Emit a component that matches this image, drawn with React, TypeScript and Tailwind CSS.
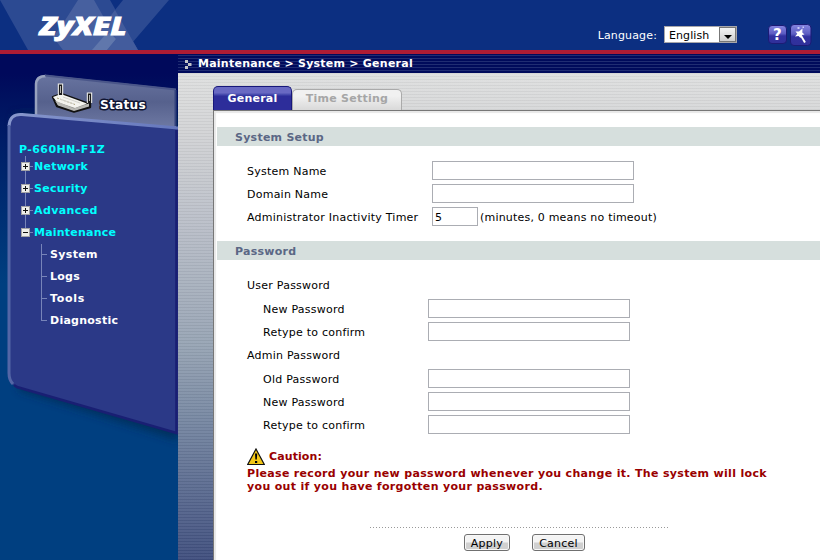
import React from "react";

const stripes =
  "bg-[repeating-linear-gradient(to_bottom,rgba(0,0,0,0.04)_0px,rgba(0,0,0,0.04)_1px,rgba(255,255,255,0.05)_1px,rgba(255,255,255,0.05)_3px)]";

function Logo() {
  return (
    <svg width="180" height="50" viewBox="0 0 180 50" className="block">
      <path d="M0 0H110L138 50H28Z" fill="#2c4a92" />
      <path d="M123 0H169L126 50H107L121 31L115 10Z" fill="#2c4a92" />
      <path d="M78 0H94L116 39L107 50H63L53 37L64 22Z" fill="#47609f" />
      <path d="M115 10L138 50H107L116 39L106 22Z" fill="#435c9d" />
      <path d="M105 35L110 33L116 39L107 50H92Z" fill="#6077ac" />
      <text x="39.8" y="35.1" textLength="87" lengthAdjust="spacingAndGlyphs" fill="#fff" stroke="#fff" strokeWidth="1.1" fontFamily="Noto Sans, Open Sans, sans-serif" fontWeight="800" fontStyle="italic" fontSize="24.5">ZyXEL</text>
    </svg>
  );
}

function HeaderIcons() {
  return (
    <svg width="44" height="24" viewBox="0 0 44 24" className="block">
      <defs>
        <linearGradient id="btn" x1="0" y1="0" x2="0" y2="1">
          <stop offset="0" stopColor="#8585e0" />
          <stop offset="0.45" stopColor="#5c5cc2" />
          <stop offset="0.58" stopColor="#3131a0" />
          <stop offset="1" stopColor="#30309a" />
        </linearGradient>
      </defs>
      <rect x="0.5" y="2.5" width="18" height="18" rx="3.5" fill="url(#btn)" stroke="#1b1b75" />
      <text x="9.5" y="17" textAnchor="middle" fill="#fff" fontFamily="DejaVu Sans, sans-serif" fontWeight="700" fontSize="15">?</text>
      <rect x="22.5" y="1.5" width="20.5" height="21" rx="3.5" fill="url(#btn)" stroke="#1b1b75" />
      <path d="M27.5 8.5L31 8.5L34.5 5.5L34.3 9.5L36.5 11.5L33.8 12L32.5 15L30.5 13L27 13.5L29.3 10.8Z" fill="#fff" />
      <path d="M32 11L37 19.5" stroke="#fff" strokeWidth="1.9" />
      <path d="M29.5 4h2v2h-2zM34.5 3.5h1.5v1.5h-1.5z" fill="#c9c9f5" />
    </svg>
  );
}

function SidebarArt() {
  return (
    <svg width="178" height="506" viewBox="0 0 178 506" className="block">
      <defs>
        <linearGradient id="tab" x1="0" y1="0" x2="0" y2="1">
          <stop offset="0" stopColor="#6874a0" />
          <stop offset="0.5" stopColor="#56618d" />
          <stop offset="1" stopColor="#6f7aa4" />
        </linearGradient>
        <linearGradient id="rim" x1="0" y1="0" x2="1" y2="0">
          <stop offset="0" stopColor="#8797cc" />
          <stop offset="1" stopColor="#6577bd" />
        </linearGradient>
        <filter id="soft" x="-10%" y="-10%" width="120%" height="120%">
          <feGaussianBlur stdDeviation="4" />
        </filter>
      </defs>
      <path d="M14 60H178V386L19 336Z" fill="#002b50" opacity="0.75" filter="url(#soft)" />
      <path d="M35 70V31Q35 20 46 21L176 35V75Z" fill="url(#tab)" />
      <path d="M36 66V31Q36 22 46 22" fill="none" stroke="#98a2be" strokeWidth="2.5" />
      <path d="M45 21.5L176 35.5" fill="none" stroke="#4a5689" strokeWidth="2" />
      <path d="M175.5 36V72" stroke="#33427c" strokeWidth="2" />
      <path d="M8 321V69Q9 59 20 60L178 74V380L18 333Q8 330 8 321Z" fill="#2b3987" />
      <path d="M176.5 76V379L17 333L14 331" fill="none" stroke="#191f73" strokeWidth="2.6" />
      <path d="M9 72Q10 59.5 22 60.5L178 74" fill="none" stroke="url(#rim)" strokeWidth="3" />
      <path d="M9 71V319Q9 326 13 330" fill="none" stroke="#5466a6" strokeWidth="3" />
      <g strokeLinejoin="round">
        <path d="M53 43L61 40L86 49L90 48V53L74 57.5L57 52Z" fill="#8f8f8b" stroke="#111" strokeWidth="2.4" />
        <path d="M53 43L61 40L87 49.5L75 54L57 48Z" fill="#f4f4ee" />
        <path d="M55 46.5L74 54.5L89 49.5V52.5L74 57L58 51.5Z" fill="#b9b9b4" />
        <path d="M57 44L75 50.5" stroke="#aaa37c" strokeDasharray="2 1.5" />
        <path d="M63 43L80 49M60 45L74 50" stroke="#d4d4ce" />
        <path d="M60.5 41V29.5M89.5 49V38.5" stroke="#eeeeea" strokeWidth="5.4" />
        <path d="M60.5 41V30.5M89.5 49V39.5" stroke="#1a1a1a" strokeWidth="3.2" />
        <path d="M60.5 39V32M89.5 47V41" stroke="#b5b5b2" strokeWidth="1" />
      </g>
      <text x="100" y="54.5" textLength="46" lengthAdjust="spacingAndGlyphs" fill="#fff" stroke="#101532" strokeWidth="3" paintOrder="stroke" strokeLinejoin="round" fontFamily="DejaVu Sans, sans-serif" fontWeight="700" fontSize="12">Status</text>
    </svg>
  );
}

function TreeBox({ open }: { open?: boolean }) {
  return (
    <svg width="13" height="9" viewBox="0 0 13 9" className="block shrink-0">
      <rect x="0.5" y="0.5" width="8" height="8" fill="#eeeeea" stroke="#a3a3a6" />
      <path d={open ? "M2 4.5H7" : "M2 4.5H7M4.5 2V7"} stroke="#111" />
      <path d="M9 4.5H12" stroke="#7784b9" />
    </svg>
  );
}

function Tree() {
  const groups = [
    { name: "Network", ls: "tracking-[0.25px]" },
    { name: "Security", ls: "tracking-[0.3px]" },
    { name: "Advanced", ls: "tracking-[0.4px]" },
    { name: "Maintenance", ls: "tracking-[0.22px]" },
  ];
  const pages = [
    { name: "System", ls: "tracking-[0.35px]" },
    { name: "Logs", ls: "tracking-[0.25px]" },
    { name: "Tools", ls: "tracking-[0.7px]" },
    { name: "Diagnostic", ls: "tracking-[0.25px]" },
  ];
  return (
    <div className="flex flex-col text-[11px] font-bold text-[#00ffff]">
      <div className="mb-[-1px] h-[15px] pl-[19px] leading-[15px] tracking-[0.42px]">P-660HN-F1Z</div>
      <div className="relative">
        <div className="absolute top-0 left-[25px] h-[76px] w-px bg-[#7784b9]" />
        {groups.map((g, i) => (
          <div key={g.name} className="relative flex h-[22px] items-start pl-[21px]">
            <div className="pt-[6px]"><TreeBox open={i === 3} /></div>
            <span className={`leading-[22px] ${g.ls}`}>{g.name}</span>
          </div>
        ))}
      </div>
      <div className="relative text-white">
        <div className="absolute top-0 left-[41px] h-[77px] w-px bg-[#7784b9]" />
        {pages.map((p) => (
          <div key={p.name} className="flex h-[22px] items-start pl-[41px]">
            <div className="mt-[10px] h-px w-[6px] bg-[#7784b9]" />
            <span className={`pl-[3px] leading-[22px] ${p.ls}`}>{p.name}</span>
          </div>
        ))}
      </div>
    </div>
  );
}

function SectionBar({ title }: { title: string }) {
  return (
    <div className="h-[19px] bg-[#d6dfdd] pl-[18px] text-[11px] leading-[21px] font-bold tracking-[0.25px] text-[#5b6785]">{title}</div>
  );
}

function Field({ label, indent, value, after }: { label: string; indent?: boolean; value?: string; after?: string }) {
  return (
    <div className="flex h-[23px] items-start">
      <label className={`shrink-0 leading-[21px] whitespace-nowrap ${indent ? "w-[211px] pl-[46px]" : "w-[215px] pl-[30px]"}`}>{label}</label>
      <input
        readOnly
        value={value ?? ""}
        className={`h-[19px] shrink-0 rounded-none border border-[#abadb3] bg-white px-[2px] pt-[2px] text-[11px] outline-none ${value ? "w-[46px]" : "w-[202px]"}`}
      />
      {after && <span className="pl-[2px] leading-[21px] tracking-[0.2px] whitespace-nowrap">{after}</span>}
    </div>
  );
}

function Button({ children, className }: { children: React.ReactNode; className: string }) {
  return (
    <button className={`h-[17px] rounded-[3px] border border-[#707070] bg-linear-to-b from-[#f4f4f4] from-45% to-[#d0d0d0] to-55% text-[11px] leading-[17px] shadow-[inset_0_0_0_1px_#f8f8f8] ${className}`}>
      {children}
    </button>
  );
}

export default function App() {
  return (
    <div className="flex h-[560px] w-[820px] flex-col overflow-hidden bg-white font-['DejaVu_Sans',Verdana,sans-serif] text-[11px] tracking-[0.24px] text-black">
      <header className="flex h-[54px] shrink-0 justify-between border-b-4 border-[#ad1c34] bg-[#0c2f81]">
        <Logo />
        <div className="flex pr-[8px]">
          <span className="pt-[27px] leading-[17px] tracking-[0.15px] text-white">Language:</span>
          <div className="mt-[26px] ml-[7px] flex h-[17px] w-[73px] border border-[#a7a6aa] bg-white">
            <span className="flex-1 pl-[4px] leading-[17px] tracking-[0.1px]">English</span>
            <div className="flex h-[15px] w-[17px] items-center justify-center border border-[#777] bg-linear-to-b from-[#f4f4f4] to-[#cfcfcf] pt-[4px]">
              <svg width="8" height="4" viewBox="0 0 8 4"><path d="M0 0H8L4 4Z" fill="#000" /></svg>
            </div>
          </div>
          <div className="mt-[23px] ml-[31px]"><HeaderIcons /></div>
        </div>
      </header>

      <div className="flex min-h-0 flex-1">
        <aside className="relative w-[178px] shrink-0 bg-linear-to-b from-[#00095b] from-[20px] to-[#003f80] to-[230px]">
          <div className="absolute inset-0"><SidebarArt /></div>
          <nav className="relative pt-[88px]"><Tree /></nav>
        </aside>

        <main className="flex min-w-0 flex-1 flex-col">
          <div className="flex h-[19px] shrink-0 items-start bg-[repeating-linear-gradient(to_bottom,#000a5b_0px,#000a5b_1px,#202c72_1px,#202c72_2px,#000a5b_2px,#000a5b_3px)]">
            <svg width="20" height="19" viewBox="0 0 20 19" className="block"><path d="M7 6h3v3H7zM10 9h3.5v3H10zM7 12h3v3H7z" fill="#c3c3c8" /></svg>
            <h1 className="leading-[19px] font-bold whitespace-nowrap text-white">Maintenance &gt; System &gt; General</h1>
          </div>

          <div className="flex min-h-0 flex-1 flex-col bg-[linear-gradient(to_bottom,#dedfdf_0px,#d2d3d5_60px,#b8bdc7_155px,#96a3b3_272px,#7485a0_350px,#3e4d7d_487px)]">
            <div className={`flex min-h-0 flex-1 flex-col ${stripes}`}>
              <div className="flex h-[37px] shrink-0 items-end pl-[35px]">
                <div className="h-[24px] w-[79px] rounded-t-[5px] border border-b-0 border-[#17177a] bg-linear-to-b from-[#6969c3] from-25% to-[#2d2d9a] to-40% text-center leading-[23px] font-bold text-white">General</div>
                <div className="h-[21px] w-[110px] rounded-t-[5px] border border-b-0 border-[#aaa] bg-linear-to-b from-[#f1f1f1] from-30% to-[#d9d9d9] text-center leading-[18px] font-bold text-[#a6a6a6]">Time Setting</div>
              </div>
              <div className="ml-[35px] flex min-h-0 flex-1 flex-col border-t border-l border-[#777] bg-white pt-[16px] pl-[3px] shadow-[inset_2px_2px_1px_#e8e8e8]">
                <SectionBar title="System Setup" />
                <div className="pt-[15px]">
                  <Field label="System Name" />
                  <Field label="Domain Name" />
                  <Field label="Administrator Inactivity Timer" value="5" after="(minutes, 0 means no timeout)" />
                </div>
                <div className="pt-[11px]"><SectionBar title="Password" /></div>
                <div className="pt-[15px]">
                  <div className="h-[24px] pl-[30px] leading-[21px]">User Password</div>
                  <Field label="New Password" indent />
                  <Field label="Retype to confirm" indent />
                  <div className="h-[24px] pl-[30px] leading-[21px]">Admin Password</div>
                  <Field label="Old Password" indent />
                  <Field label="New Password" indent />
                  <Field label="Retype to confirm" indent />
                </div>
                <div className="pt-[10px] pl-[30px] font-bold text-[#990000]">
                  <div className="flex h-[19px]">
                    <svg width="18" height="18" viewBox="0 0 18 18" className="block"><path d="M9 1L17.3 16.5H0.7Z" fill="#f3c616" stroke="#111" strokeWidth="1.2" /><path d="M8 5.5H10.2L9.8 11.5H8.4ZM8 13h2.2v2H8z" fill="#000" /></svg>
                    <span className="pl-[4px] leading-[17px] tracking-[0.1px]">Caution:</span>
                  </div>
                  <p className="leading-[13px] tracking-[0.325px] whitespace-nowrap">Please record your new password whenever you change it. The system will lock<br />you out if you have forgotten your password.</p>
                </div>
                <div className="mt-[34px] ml-[153px] h-px w-[299px] shrink-0 bg-[repeating-linear-gradient(to_right,#999_0px,#999_1px,#fff_1px,#fff_3px)]" />
                <div className="flex pt-[6px] pl-[247px]">
                  <Button className="w-[46px]">Apply</Button>
                  <Button className="ml-[22px] w-[53px]">Cancel</Button>
                </div>
              </div>
            </div>
          </div>
        </main>
      </div>
    </div>
  );
}
